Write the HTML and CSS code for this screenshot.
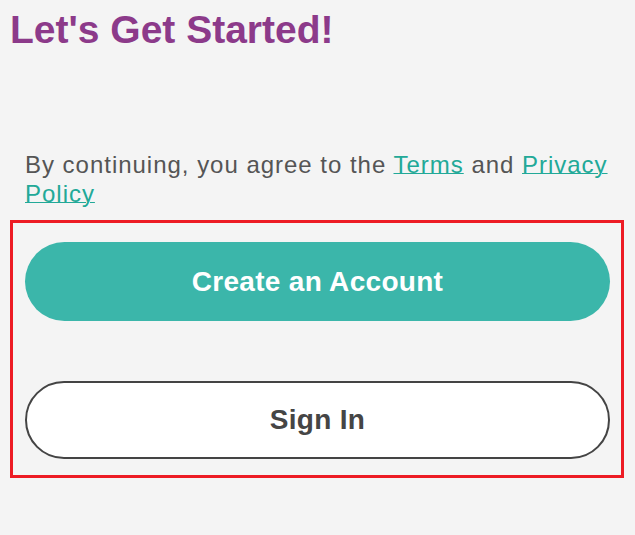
FILE: index.html
```html
<!DOCTYPE html>
<html lang="en">
<head>
<meta charset="utf-8">
<title>Let's Get Started!</title>
<link rel="stylesheet" href="styles.css">
</head>
<body>
<main class="page">
  <h1 class="title">Let's Get Started!</h1>
  <p class="terms">By continuing, you agree to the <a href="#" class="link">Terms</a> and <a href="#" class="link">Privacy Policy</a></p>
  <div class="actions">
    <button class="btn btn-primary" type="button">Create an Account</button>
    <button class="btn btn-outline" type="button">Sign In</button>
  </div>
</main>
</body>
</html>
```
FILE: styles.css
```css
html, body {
  margin: 0;
  padding: 0;
  background: #f4f4f4;
}
body {
  font-family: "Liberation Sans", Arial, sans-serif;
  width: 635px;
  height: 535px;
  overflow: hidden;
}
.page {
  display: flex;
  flex-direction: column;
  padding-top: 10px;
}
.title {
  margin: 0 0 101px 10px;
  font-size: 39px;
  line-height: 39px;
  font-weight: 700;
  color: #8c3a8a;
  letter-spacing: 0;
}
.terms {
  margin: 0 0 12px 25px;
  width: 600px;
  font-size: 24px;
  line-height: 29px;
  letter-spacing: 0.98px;
  color: #555555;
}
.link {
  color: #22a998;
  text-decoration: underline;
  text-decoration-thickness: 1px;
  text-underline-offset: 0px;
}
.actions {
  margin-left: 10px;
  width: 614px;
  box-sizing: border-box;
  border: 3px solid #ed1c24;
  padding: 19px 11px 16px 12px;
  display: flex;
  flex-direction: column;
  gap: 60px;
}
.btn {
  font-family: "Liberation Sans", Arial, sans-serif;
  font-size: 28px;
  font-weight: 700;
  letter-spacing: 0.3px;
  border-radius: 40px;
  width: 585px;
  cursor: pointer;
}
.btn-primary {
  height: 79px;
  background: #3bb6aa;
  color: #ffffff;
  border: none;
}
.btn-outline {
  height: 78px;
  background: #ffffff;
  color: #454545;
  border: 2px solid #444444;
}
```
